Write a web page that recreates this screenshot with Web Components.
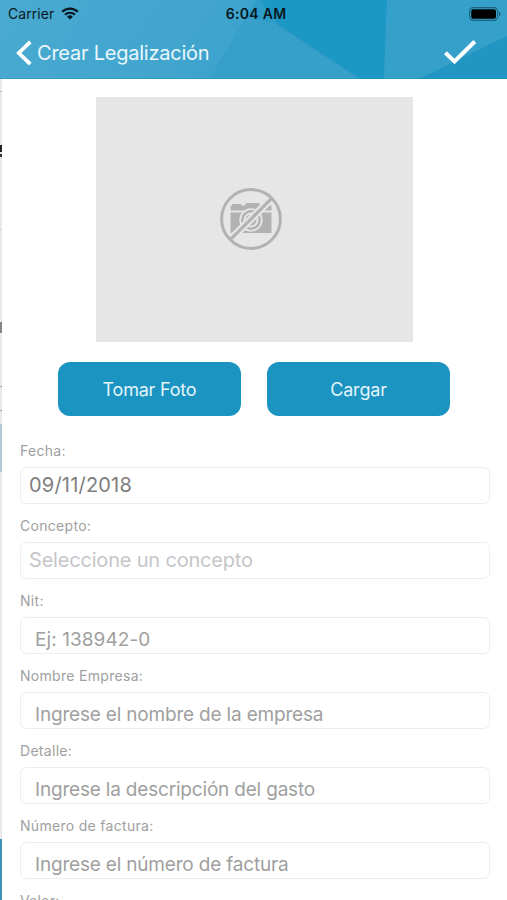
<!DOCTYPE html>
<html lang="es">
<head>
<meta charset="utf-8">
<title>Crear Legalización</title>
<style>
  body {
    margin: 0;
    height: 900px;
    overflow: hidden;
    background: #fff;
    font-family: Inter, "Liberation Sans", sans-serif;
  }
</style>
</head>
<body>
<legalizacion-page>
  <app-header slot="header" hora="6:04 AM">Crear Legalización</app-header>
  <foto-preview></foto-preview>
  <boton-grupo>
    <app-boton>Tomar Foto</app-boton>
    <app-boton>Cargar</app-boton>
  </boton-grupo>
  <campo-form label="Fecha:" tipo="fecha">09/11/2018</campo-form>
  <campo-form label="Concepto:" tipo="lista">Seleccione un concepto</campo-form>
  <campo-form label="Nit:" tipo="numero">Ej: 138942-0</campo-form>
  <campo-form label="Nombre Empresa:">Ingrese el nombre de la empresa</campo-form>
  <campo-form label="Detalle:">Ingrese la descripción del gasto</campo-form>
  <campo-form label="Número de factura:">Ingrese el número de factura</campo-form>
  <campo-form label="Valor:"></campo-form>
</legalizacion-page>

<script>
class LegalizacionPage extends HTMLElement {
  constructor() {
    super();
    this.attachShadow({ mode: "open" }).innerHTML = `
    <style>
    :host {
      display: flex;
      flex-direction: column;
      height: 900px;
      overflow: hidden;
    }

    .cuerpo {
      flex: 1;
      display: grid;
      grid-template-columns: 2px 1fr;
      min-height: 0;
    }

    .borde {
      width: 2px;
      height: 821px;
    }

    .contenido {
      display: flex;
      flex-direction: column;
      padding: 18px 17px 0 18px;
      min-width: 0;
      overflow: hidden;
    }
    </style>
    <slot name="header"></slot>
    <div class="cuerpo">
      <!-- edge of the screen underneath -->
      <svg class="borde" viewBox="0 0 2 821" preserveAspectRatio="none">
        <rect width="2" height="821" fill="#e9e9eb"/>
        <rect y="12" width="2" height="1" fill="#b5b5b5"/>
        <rect y="66" width="2" height="7" fill="#222"/>
        <rect y="75" width="2" height="3" fill="#333"/>
        <rect y="150" width="2" height="1" fill="#d0d0d0"/>
        <rect y="243" width="2" height="11" fill="#858585"/>
        <rect y="307" width="2" height="1" fill="#a5a5a5"/>
        <rect y="331" width="2" height="1" fill="#a5a5a5"/>
        <rect y="345" width="2" height="48" fill="#afcbd6"/>
        <rect y="760" width="2" height="61" fill="#3c93b5"/>
      </svg>
      <div class="contenido"><slot></slot></div>
    </div>`;
  }
}

class AppHeader extends HTMLElement {
  constructor() {
    super();
    this.attachShadow({ mode: "open" });
  }

  connectedCallback() {
    this.shadowRoot.innerHTML = `
    <style>
    :host {
      display: grid;
      grid-template: 79px / 1fr;
      flex: none;
      overflow: hidden;
    }

    .fondo, .capa {
      grid-area: 1 / 1;
      min-width: 0;
    }

    .fondo {
      width: 507px;
      height: 79px;
    }

    .capa {
      display: flex;
      flex-direction: column;
    }

    .estado {
      display: grid;
      grid-template-columns: 1fr auto 1fr;
      align-items: center;
      height: 27px;
      padding: 0 6px 0 8px;
      color: #081820;
      font-size: 14px;
    }

    .operador {
      display: flex;
      align-items: center;
      gap: 7px;
      letter-spacing: 0.05px;
    }

    .hora {
      padding-left: 3px;
      font-weight: 600;
      font-size: 14px;
      letter-spacing: 0.3px;
    }

    .bateria {
      justify-self: end;
    }

    .barra {
      display: flex;
      align-items: center;
      height: 51px;
      padding: 0 30px 0 15px;
      color: #e9f7fc;
    }

    .titulo {
      flex: 1;
      margin-left: 4px;
      font-size: 20px;
      letter-spacing: -0.23px;
      white-space: nowrap;
    }

    svg {
      display: block;
    }
    </style>
    <svg class="fondo" viewBox="0 0 507 79">
      <defs>
        <linearGradient id="cielo" x1="0" y1="0" x2="1" y2="0.1">
          <stop offset="0" stop-color="#4aaad1"/>
          <stop offset="0.48" stop-color="#3fa4cd"/>
          <stop offset="1" stop-color="#319fcb"/>
        </linearGradient>
      </defs>
      <rect width="507" height="79" fill="url(#cielo)"/>
      <path d="M210 79 256 0H387L384 79Z" fill="#2f9dc9"/>
      <path d="M210 79 246 17 277 24 360 79Z" fill="#369fca"/>
      <path d="M260 0H387L384 79H360L277 24Z" fill="#1d97c5"/>
      <path d="M387 0H507V36L419 79H384Z" fill="#35a0ca"/>
      <path d="M419 79 507 36V79Z" fill="#2196c3"/>
      <rect y="78" width="507" height="1" fill="#218fba" opacity="0.4"/>
    </svg>
    <div class="capa">
      <div class="estado">
        <div class="operador">
          <span>Carrier</span>
          <svg width="18" height="13" viewBox="0 0 18 13" fill="none" stroke="#081820" stroke-width="2.2">
            <path d="M1.2 4.8a11 11 0 0 1 15.6 0"/>
            <path d="M4 7.8a7.1 7.1 0 0 1 10 0"/>
            <path d="M9 12.6 6.1 9.7a4.1 4.1 0 0 1 5.8 0Z" fill="#081820" stroke="none"/>
          </svg>
        </div>
        <span class="hora">${this.getAttribute("hora")}</span>
        <svg class="bateria" width="32" height="14" viewBox="0 0 32 14">
          <rect x="0.6" y="0.6" width="28" height="12.8" rx="3.6" fill="none" stroke="#1c637d" stroke-width="1.1"/>
          <rect x="2.2" y="2.2" width="24.8" height="9.6" rx="2" fill="#000"/>
          <path d="M30 4.7q1.6.7 1.6 2.3T30 9.3Z" fill="#1c637d"/>
        </svg>
      </div>
      <div class="barra">
        <svg width="18" height="26" viewBox="0 0 18 26">
          <path d="M15.3 1.8 3.8 13l11.5 11.2" fill="none" stroke="#fff" stroke-width="3.8"/>
        </svg>
        <span class="titulo"><slot></slot></span>
        <svg width="34" height="26" viewBox="0 0 34 26">
          <path d="M2.4 12.8 11.5 21.5 31.8 1.5" fill="none" stroke="#fff" stroke-width="4"/>
        </svg>
      </div>
    </div>`;
  }
}

class FotoPreview extends HTMLElement {
  constructor() {
    super();
    this.attachShadow({ mode: "open" }).innerHTML = `
    <style>
    :host {
      display: flex;
      align-items: center;
      justify-content: center;
      flex: none;
      width: 317px;
      height: 245px;
      margin-left: 76px;
      background: #e6e6e6;
    }

    svg {
      display: block;
      margin: 0 7px 1px 0;
    }
    </style>
    <svg width="64" height="64" viewBox="0 0 64 64">
      <path d="M11.5 23.5V18.5H13V17h9v1.5h4L27 16h13l1.5 2.5h11v5ZM11.5 25.5h41v20.5h-41Z" fill="#b2b2b2"/>
      <circle cx="32" cy="33" r="10.8" fill="#b2b2b2" stroke="#e6e6e6" stroke-width="1.8"/>
      <circle cx="32" cy="33" r="6.5" fill="none" stroke="#e6e6e6" stroke-width="2"/>
      <path d="M10.8 53.2 53.2 10.8" stroke="#e6e6e6" stroke-width="7.5"/>
      <path d="M10.8 53.2 53.2 10.8" stroke="#b2b2b2" stroke-width="3.2"/>
      <circle cx="32" cy="32" r="29.4" fill="none" stroke="#b2b2b2" stroke-width="3"/>
    </svg>`;
  }
}

class BotonGrupo extends HTMLElement {
  constructor() {
    super();
    this.attachShadow({ mode: "open" }).innerHTML = `
    <style>
    :host {
      display: flex;
      flex: none;
      gap: 26px;
      margin: 19.5px 0 26px 38px;
    }
    </style>
    <slot></slot>`;
  }
}

class AppBoton extends HTMLElement {
  constructor() {
    super();
    this.attachShadow({ mode: "open" }).innerHTML = `
    <style>
    :host {
      display: flex;
      box-sizing: border-box;
      align-items: center;
      justify-content: center;
      width: 183px;
      height: 54.5px;
      padding-top: 1.5px;
      border-radius: 12px;
      background: #1b94c1;
      color: #e3f5fb;
      font-size: 18px;
      letter-spacing: -0.2px;
      cursor: pointer;
    }
    </style>
    <slot></slot>`;
  }
}

class CampoForm extends HTMLElement {
  constructor() {
    super();
    this.attachShadow({ mode: "open" });
  }

  connectedCallback() {
    this.shadowRoot.innerHTML = `
    <style>
    :host {
      display: block;
      flex: none;
      height: 75px;
      color: #a0a0a0;
    }

    .label {
      height: 24.5px;
      line-height: 18px;
      font-size: 14px;
      letter-spacing: 0.3px;
    }

    .caja {
      box-sizing: border-box;
      height: 37px;
      padding: 4px 0 0 14px;
      border: 1.5px solid #eee;
      border-radius: 6px;
      font-size: 19px;
      line-height: 36px;
      letter-spacing: -0.19px;
      white-space: nowrap;
    }

    :host([tipo="numero"]) .caja {
      letter-spacing: 0.08px;
    }

    :host([tipo="fecha"]) .caja,
    :host([tipo="lista"]) .caja {
      padding: 0 0 0 8px;
      font-size: 20px;
      line-height: 35px;
    }

    :host([tipo="fecha"]) .caja {
      color: #7e7e7e;
      letter-spacing: 0.2px;
    }

    :host([tipo="lista"]) .caja {
      color: #c5c5c9;
    }
    </style>
    <div class="label">${this.getAttribute("label")}</div>
    <div class="caja"><slot></slot></div>`;
  }
}

customElements.define("legalizacion-page", LegalizacionPage);
customElements.define("app-header", AppHeader);
customElements.define("foto-preview", FotoPreview);
customElements.define("boton-grupo", BotonGrupo);
customElements.define("app-boton", AppBoton);
customElements.define("campo-form", CampoForm);
</script>
</body>
</html>
